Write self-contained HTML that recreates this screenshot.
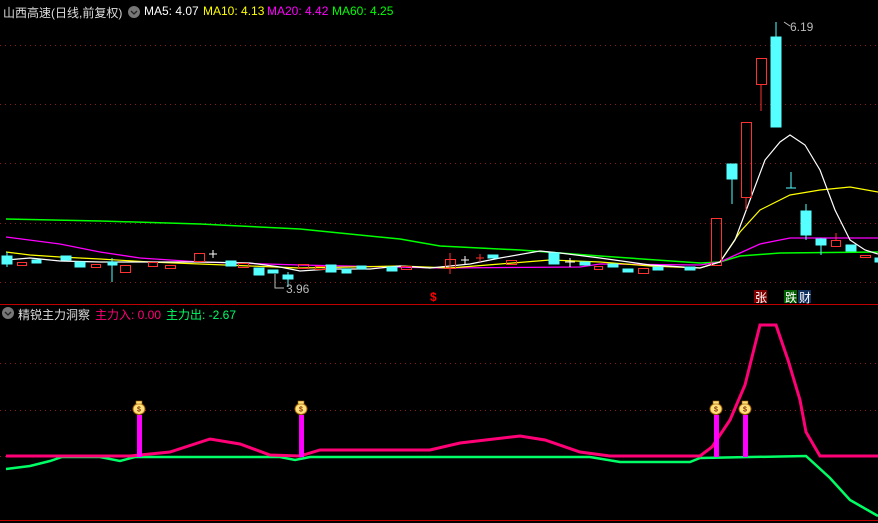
<!DOCTYPE html>
<html><head><meta charset="utf-8"><style>
body{margin:0;background:#000;width:878px;height:523px;overflow:hidden;font-family:"Liberation Sans","Noto Sans CJK SC",sans-serif}
svg{position:absolute;left:0;top:0}
.t{position:absolute;font-size:12px;white-space:nowrap}
</style></head><body>
<svg width="878" height="523" xmlns="http://www.w3.org/2000/svg">
<g stroke="#8b1a1a" stroke-dasharray="1,4" stroke-width="1">
<line x1="0" y1="45.5" x2="878" y2="45.5"/><line x1="0" y1="104.5" x2="878" y2="104.5"/>
<line x1="0" y1="163.5" x2="878" y2="163.5"/><line x1="0" y1="223.5" x2="878" y2="223.5"/>
<line x1="0" y1="282.5" x2="878" y2="282.5"/>
<line x1="0" y1="363.5" x2="878" y2="363.5"/><line x1="0" y1="410.5" x2="878" y2="410.5"/>
<line x1="0" y1="456.5" x2="10" y2="456.5"/>
</g>
<line x1="0" y1="304.5" x2="878" y2="304.5" stroke="#c00000"/>
<line x1="0" y1="520.5" x2="878" y2="520.5" stroke="#c00000"/>
<polyline fill="none" stroke="#00ff00" stroke-width="1.5" points="6,219 100,221 200,224 300,229 400,239 440,246 520,250 600,256 700,263 720,262 740,256 780,253 878,252"/>
<polyline fill="none" stroke="#ff00ff" stroke-width="1.3" points="6,237 60,244 100,252 140,258 200,262 300,265 440,268 580,267 600,264 700,265 720,262 740,253 760,244 790,238 878,238"/>
<polyline fill="none" stroke="#ffff00" stroke-width="1.2" points="6,252 30,255 60,257 100,259 150,262 200,264 250,266 300,268 350,267 400,266 450,268 500,264 550,260 600,262 650,266 700,268 720,262 740,232 760,210 790,195 820,190 850,187 878,192"/>
<polyline fill="none" stroke="#ffffff" stroke-width="1.2" points="6,260 30,258 60,261 100,262 150,262 200,262 250,263 280,267 300,271 330,269 370,269 400,266 430,268 470,264 500,258 540,251 560,253 600,258 650,265 700,268 720,262 735,240 750,200 765,160 780,142 790,135 805,145 820,170 835,210 850,240 865,250 878,254"/>
<g stroke-width="1">
<g fill="#5ff" stroke="#5ff">
<rect x="2" y="256" width="10" height="8"/><line x1="7" y1="252" x2="7" y2="267"/>
<rect x="32" y="260" width="9" height="3"/><rect x="75" y="262" width="10" height="5"/>
<rect x="61" y="256" width="10" height="4"/><rect x="108" y="262" width="9" height="3"/><line x1="112" y1="258" x2="112" y2="282"/>
<rect x="226" y="261" width="10" height="5"/><rect x="254" y="268" width="10" height="7"/>
<rect x="268" y="270" width="10" height="3"/><rect x="283" y="275" width="10" height="4"/><line x1="288" y1="272" x2="288" y2="287"/>
<rect x="326" y="265" width="10" height="7"/><rect x="342" y="269" width="9" height="4"/><rect x="357" y="266" width="9" height="3"/>
<rect x="387" y="267" width="10" height="4"/><rect x="488" y="255" width="10" height="3"/>
<rect x="549" y="253" width="10" height="11"/><rect x="580" y="262" width="10" height="3"/>
<rect x="608" y="264" width="10" height="3"/><rect x="623" y="269" width="10" height="3"/><rect x="653" y="267" width="10" height="3"/>
<rect x="685" y="267" width="10" height="3"/>
<rect x="727" y="164" width="10" height="15"/><line x1="732" y1="179" x2="732" y2="204"/>
<rect x="771" y="37" width="10" height="90"/><line x1="776" y1="22" x2="776" y2="37"/>
<line x1="786" y1="188" x2="796" y2="188"/><line x1="791" y1="172" x2="791" y2="188"/>
<rect x="801" y="211" width="10" height="24"/><line x1="806" y1="204" x2="806" y2="240"/>
<rect x="816" y="239" width="10" height="6"/><line x1="821" y1="238" x2="821" y2="255"/>
<rect x="846" y="245" width="10" height="6"/><rect x="875" y="258" width="3" height="4"/>
</g>
<g fill="none" stroke="#ff3030">
<rect x="17.5" y="262.5" width="9" height="3"/><rect x="91.5" y="264.5" width="9" height="3"/>
<rect x="120.5" y="265.5" width="10" height="7"/><rect x="148.5" y="262.5" width="9" height="4"/>
<rect x="165.5" y="265.5" width="10" height="3"/><rect x="194.5" y="253.5" width="10" height="8"/>
<rect x="238.5" y="263.5" width="10" height="4"/><rect x="298.5" y="264.5" width="10" height="4"/>
<rect x="315.5" y="266.5" width="10" height="3"/><rect x="401.5" y="266.5" width="10" height="3"/>
<rect x="445.5" y="259.5" width="10" height="9"/><line x1="450" y1="253" x2="450" y2="274"/>
<rect x="506.5" y="260.5" width="10" height="4"/>
<rect x="638.5" y="268.5" width="10" height="5"/>
<rect x="594.5" y="266.5" width="8" height="3"/>
<rect x="711.5" y="218.5" width="10" height="47"/>
<rect x="741.5" y="122.5" width="10" height="75"/><line x1="746" y1="198" x2="746" y2="210"/>
<rect x="756.5" y="58.5" width="10" height="26"/><line x1="761" y1="85" x2="761" y2="111"/>
<rect x="831.5" y="240.5" width="9" height="6"/><line x1="836" y1="233" x2="836" y2="240"/>
<rect x="860.5" y="255.5" width="10" height="2"/>
</g>
<g stroke="#fff"><line x1="461" y1="260" x2="469" y2="260"/><line x1="465" y1="256" x2="465" y2="264"/>
<line x1="209" y1="254" x2="217" y2="254"/><line x1="213" y1="250" x2="213" y2="258"/>
<line x1="565" y1="262" x2="575" y2="262"/><line x1="570" y1="258" x2="570" y2="267"/></g>
<g stroke="#ff3030"><line x1="476" y1="258" x2="484" y2="258"/><line x1="480" y1="254" x2="480" y2="262"/></g>
</g>
<polyline fill="none" stroke="#bbb" points="275,274 275,288 284,288"/>
<polyline fill="none" stroke="#bbb" points="784,22 790,26"/>
<g stroke-width="3" fill="none">
<polyline stroke="#00ff66" stroke-width="2.5" points="6,469 30,466 50,461 62,457 100,457 120,461 135,457 280,457 295,460 310,457 590,457 620,462 690,462 700,458 806,456 830,478 850,500 878,516"/>
<polyline stroke="#ff0077" points="6,456 130,456 170,452 210,439 240,444 270,455 300,456 320,450 430,450 460,443 520,436 545,440 580,452 610,456 700,456 712,447 730,420 745,385 760,325 776,325 788,360 800,400 806,432 820,456 878,456"/>
</g>
<g fill="#ff00ff"><rect x="137" y="415" width="5" height="42"/><rect x="299" y="415" width="5" height="42"/><rect x="714" y="415" width="5" height="42"/><rect x="743" y="415" width="5" height="42"/></g>
<g font-family="Liberation Sans" font-size="7" font-weight="bold" text-anchor="middle">
<g transform="translate(139,408)"><ellipse cx="0" cy="1" rx="6" ry="5.5" fill="#ffe07a" stroke="#a06000"/><rect x="-3" y="-7" width="6" height="3" fill="#ffe07a" stroke="#a06000" stroke-width="0.6"/><text y="3.5" fill="#803000">$</text></g>
<g transform="translate(301,408)"><ellipse cx="0" cy="1" rx="6" ry="5.5" fill="#ffe07a" stroke="#a06000"/><rect x="-3" y="-7" width="6" height="3" fill="#ffe07a" stroke="#a06000" stroke-width="0.6"/><text y="3.5" fill="#803000">$</text></g>
<g transform="translate(716,408)"><ellipse cx="0" cy="1" rx="6" ry="5.5" fill="#ffe07a" stroke="#a06000"/><rect x="-3" y="-7" width="6" height="3" fill="#ffe07a" stroke="#a06000" stroke-width="0.6"/><text y="3.5" fill="#803000">$</text></g>
<g transform="translate(745,408)"><ellipse cx="0" cy="1" rx="6" ry="5.5" fill="#ffe07a" stroke="#a06000"/><rect x="-3" y="-7" width="6" height="3" fill="#ffe07a" stroke="#a06000" stroke-width="0.6"/><text y="3.5" fill="#803000">$</text></g>
</g>
<circle cx="134" cy="12" r="6" fill="#777"/><polyline points="131,11 134,14 137,11" fill="none" stroke="#222" stroke-width="1.3"/>
<circle cx="8" cy="313" r="6" fill="#777"/><polyline points="5,312 8,315 11,312" fill="none" stroke="#222" stroke-width="1.3"/>
<rect x="754" y="290" width="13" height="13" fill="#800000"/>
<rect x="784" y="290" width="13" height="13" fill="#006000"/>
<rect x="798" y="290" width="13" height="13" fill="#103060"/>
</svg>
<div class="t" style="left:3px;top:4px;color:#ddd">山西高速(日线,前复权)</div>
<div class="t" style="left:144px;top:4px;color:#fff">MA5: 4.07</div>
<div class="t" style="left:203px;top:4px;color:#ff0">MA10: 4.13</div>
<div class="t" style="left:267px;top:4px;color:#f0f">MA20: 4.42</div>
<div class="t" style="left:332px;top:4px;color:#0f0">MA60: 4.25</div>
<div class="t" style="left:790px;top:20px;color:#bbb">6.19</div>
<div class="t" style="left:286px;top:282px;color:#bbb">3.96</div>
<div class="t" style="left:430px;top:290px;color:#f00;font-weight:bold">$</div>
<div class="t" style="left:755px;top:289px;color:#fff">张</div>
<div class="t" style="left:785px;top:289px;color:#fff">跌</div>
<div class="t" style="left:799px;top:289px;color:#fff">财</div>
<div class="t" style="left:18px;top:306px;color:#ddd">精锐主力洞察</div>
<div class="t" style="left:95px;top:306px;color:#ff0077">主力入: 0.00</div>
<div class="t" style="left:166px;top:306px;color:#00ff66">主力出: -2.67</div>
</body></html>
